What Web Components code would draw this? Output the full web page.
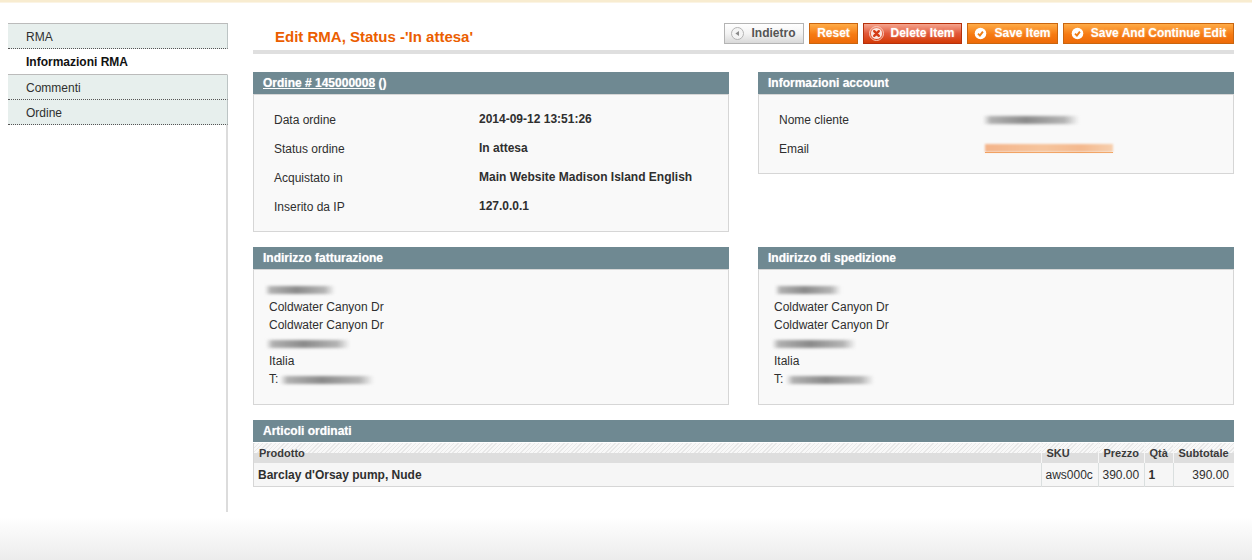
<!DOCTYPE html>
<html lang="it">

<head>
  <meta charset="UTF-8">
  <title>Edit RMA</title>
  <style>
    html, body { margin: 0; padding: 0; }
    body {
      width: 1252px;
      height: 560px;
      overflow: hidden;
      display: flex;
      flex-direction: column;
      background: #fff;
      color: #2f2f2f;
      font: 12px/18px "Liberation Sans", Arial, sans-serif;
    }
    .columns { display: flex; align-items: stretch; height: 489px; padding: 20px 18px 0 8px; box-sizing: content-box; }
    .strip { background: #f8ecd0; border-bottom: 1px solid #fbf4e4; box-sizing: border-box; height: 3px; }
    .content { flex: 1; margin-left: 25px; min-width: 0; }
    .grid { display: grid; grid-template-columns: 476px 476px; column-gap: 29px; row-gap: 15px; align-items: start; margin-bottom: 15px; }
    .foot { flex: 1; background: linear-gradient(#fff 0, #fff 5px, #ececec 100%); }
    rma-panel a { color: #fff; }
  </style>
</head>

<body>
  <div class="strip"></div>
  <div class="columns">
    <rma-sidebar>
      <rma-tab>RMA</rma-tab>
      <rma-tab active>Informazioni RMA</rma-tab>
      <rma-tab>Commenti</rma-tab>
      <rma-tab>Ordine</rma-tab>
    </rma-sidebar>

    <div class="content">
      <rma-header title-text="Edit RMA, Status -'In attesa'">
        <rma-button kind="grey" icon="back" width="80">Indietro</rma-button>
        <rma-button width="49">Reset</rma-button>
        <rma-button kind="red" icon="cross" width="99">Delete Item</rma-button>
        <rma-button icon="check" width="91">Save Item</rma-button>
        <rma-button icon="check" width="171">Save And Continue Edit</rma-button>
      </rma-header>

      <div class="grid">
        <rma-panel>
          <span slot="title"><a href="#">Ordine # 145000008</a> ()</span>
          <rma-info label="Data ordine"><b>2014-09-12 13:51:26</b></rma-info>
          <rma-info label="Status ordine"><b>In attesa</b></rma-info>
          <rma-info label="Acquistato in"><b>Main Website Madison Island English</b></rma-info>
          <rma-info label="Inserito da IP"><b>127.0.0.1</b></rma-info>
        </rma-panel>
        <rma-panel>
          <span slot="title">Informazioni account</span>
          <rma-info label="Nome cliente"><rma-blur width="96" offset="-1"></rma-blur></rma-info>
          <rma-info label="Email"><rma-blur width="128" offset="1" tone="mail"></rma-blur></rma-info>
        </rma-panel>
        <rma-panel>
          <span slot="title">Indirizzo fatturazione</span>
          <rma-address>
            <div><rma-blur width="70" offset="-4"></rma-blur></div>
            <div>Coldwater Canyon Dr</div>
            <div>Coldwater Canyon Dr</div>
            <div><rma-blur width="84" offset="-3"></rma-blur></div>
            <div>Italia</div>
            <div>T:<rma-blur width="94" offset="2"></rma-blur></div>
          </rma-address>
        </rma-panel>
        <rma-panel>
          <span slot="title">Indirizzo di spedizione</span>
          <rma-address>
            <div><rma-blur width="66" offset="1"></rma-blur></div>
            <div>Coldwater Canyon Dr</div>
            <div>Coldwater Canyon Dr</div>
            <div><rma-blur width="84" offset="-2"></rma-blur></div>
            <div>Italia</div>
            <div>T:<rma-blur width="88" offset="3"></rma-blur></div>
          </rma-address>
        </rma-panel>
      </div>

      <rma-items></rma-items>
    </div>
  </div>
  <div class="foot"></div>

  <script>
    class RmaSidebar extends HTMLElement {
      constructor() {
        super();
        this.attachShadow({ mode: 'open' });
        this.shadowRoot.innerHTML = `
          <style>
            :host {
              display: block;
              flex: none;
              width: 220px;
              box-sizing: border-box;
              border-right: 2px solid #dcdcdc;
              color: #2f2f2f;
            }
            .tabs { margin-right: -2px; }
          </style>
          <div class="tabs"><slot></slot></div>
        `;
      }
    }

    class RmaTab extends HTMLElement {
      constructor() {
        super();
        this.attachShadow({ mode: 'open' });
        this.shadowRoot.innerHTML = `
          <style>
            :host {
              display: block;
              height: 24px;
              padding-left: 18px;
              background: #e7efed;
              border-right: 1px solid #bcc4c4;
              border-bottom: 1px dotted #555;
              line-height: 26px;
              color: #2f2f2f;
            }
            :host([active]) {
              height: 25px;
              background: #fff;
              border-right-color: transparent;
              border-bottom: 1px solid #bbb;
              font-weight: bold;
              color: #111;
            }
          </style>
          <slot></slot>
        `;
      }
      connectedCallback() {
        // first tab carries the panel's top line
        if (!this.previousElementSibling) {
          this.style.borderTop = '1px solid #bbb';
        }
      }
    }

    class RmaHeader extends HTMLElement {
      constructor() {
        super();
        this.attachShadow({ mode: 'open' });
      }
      connectedCallback() {
        this.shadowRoot.innerHTML = `
          <style>
            :host {
              display: flex;
              justify-content: space-between;
              align-items: flex-start;
              height: 27px;
              margin-bottom: 18px;
              border-bottom: 4px solid #dfdfdf;
            }
            h3 {
              margin: 5px 0 0 22px;
              font: bold 15px/18px "Liberation Sans", Arial, sans-serif;
              color: #eb5e00;
            }
            .buttons { display: flex; gap: 5px; }
          </style>
          <h3>${this.getAttribute('title-text')}</h3>
          <div class="buttons"><slot></slot></div>
        `;
      }
    }

    const BUTTON_ICONS = {
      back: `<circle cx="7.5" cy="7.5" r="6" fill="#f4f4f4" stroke="#b4b4b4"/><path d="M9 5v5L5.4 7.5z" fill="#8a8a8a"/>`,
      cross: `<circle cx="7.5" cy="7.5" r="7" fill="none" stroke="#f7c9b8"/><circle cx="7.5" cy="7.5" r="5.6" fill="#fbe6de"/><path d="M5.2 5.2l4.6 4.6M9.8 5.2l-4.6 4.6" stroke="#d43c14" stroke-width="2.4" stroke-linecap="round"/>`,
      check: `<circle cx="7.5" cy="7.5" r="5.8" fill="#fff"/><path d="M5 7.6l1.9 2 3-4" fill="none" stroke="#ef7d13" stroke-width="1.9"/>`
    };

    class RmaButton extends HTMLElement {
      constructor() {
        super();
        this.attachShadow({ mode: 'open' });
      }
      connectedCallback() {
        const icon = BUTTON_ICONS[this.getAttribute('icon')];
        this.shadowRoot.innerHTML = `
          <style>
            :host {
              display: flex;
              align-items: center;
              justify-content: center;
              gap: 6px;
              box-sizing: border-box;
              width: ${this.getAttribute('width')}px;
              height: 21px;
              padding: 0 ${icon ? 1 : 0}px 1px 0;
              border: 1px solid #c9650f;
              background: linear-gradient(#ffac47, #f67a12 55%, #ee6a08);
              color: #fff;
              font: bold 12px/18px "Liberation Sans", Arial, sans-serif;
              text-shadow: 0 0 2px rgba(255, 225, 190, .75);
              white-space: nowrap;
            }
            :host([kind="red"]) {
              border-color: #b5300c;
              background: linear-gradient(#f5a58e, #e2593a 50%, #d43a06);
              text-shadow: 0 0 2px rgba(255, 225, 215, .7);
            }
            :host([kind="grey"]) {
              border-color: #b4b4b4;
              background: linear-gradient(#fff, #f3f3f3 50%, #d9d9d9);
              color: #555;
              text-shadow: none;
              gap: 7px;
              padding-right: 3px;
            }
            svg { flex: none; }
          </style>
          ${icon ? `<svg width="15" height="15" viewBox="0 0 15 15">${icon}</svg>` : ''}
          <slot></slot>
        `;
      }
    }

    class RmaPanel extends HTMLElement {
      constructor() {
        super();
        this.attachShadow({ mode: 'open' });
        this.shadowRoot.innerHTML = `
          <style>
            :host { display: block; }
            .head {
              height: 22px;
              padding-left: 10px;
              background: #6f8992;
              color: #fff;
              font-weight: bold;
              line-height: 22px;
              text-shadow: 0 0 1px rgba(255, 255, 255, .6);
            }
            .body {
              box-sizing: border-box;
              padding: 11px 0 9px;
              background: #f9f9f9;
              border: 1px solid #d6d6d6;
            }
          </style>
          <div class="head"><slot name="title"></slot></div>
          <div class="body"><slot></slot></div>
        `;
      }
    }

    class RmaInfo extends HTMLElement {
      constructor() {
        super();
        this.attachShadow({ mode: 'open' });
      }
      connectedCallback() {
        this.shadowRoot.innerHTML = `
          <style>
            :host {
              display: grid;
              grid-template-columns: 205px 1fr;
              height: 29px;
              padding-left: 20px;
              line-height: 29px;
              color: #2f2f2f;
            }
            .value { position: relative; top: -1px; }
          </style>
          <span>${this.getAttribute('label')}</span>
          <span class="value"><slot></slot></span>
        `;
      }
    }

    class RmaAddress extends HTMLElement {
      constructor() {
        super();
        this.attachShadow({ mode: 'open' });
        this.shadowRoot.innerHTML = `
          <style>
            :host {
              display: block;
              margin-top: -1px;
              padding: 0 15px 7px;
              line-height: 18px;
              color: #2f2f2f;
            }
          </style>
          <slot></slot>
        `;
      }
    }

    // stands in for the customer data that is blurred out in the screenshot
    class RmaBlur extends HTMLElement {
      constructor() {
        super();
        this.attachShadow({ mode: 'open' });
      }
      connectedCallback() {
        const mail = this.getAttribute('tone') === 'mail';
        this.shadowRoot.innerHTML = `
          <style>
            :host {
              display: inline-block;
              vertical-align: middle;
              width: ${this.getAttribute('width')}px;
              margin-left: ${this.getAttribute('offset') || 0}px;
              ${mail ? 'border-bottom: 1px solid #f0984f;' : ''}
            }
            div {
              height: 8px;
              filter: blur(${mail ? 1.3 : 1.7}px);
              background: ${mail
                ? 'linear-gradient(90deg, #f4b48a, #f6c49c 45%, #f4b98e 75%, #f7cfae)'
                : 'linear-gradient(90deg, transparent, #b0b0b0 8%, #8a8a8a 45%, #b4b4b4 85%, transparent)'};
            }
          </style>
          <div></div>
        `;
      }
    }

    class RmaItems extends HTMLElement {
      constructor() {
        super();
        this.attachShadow({ mode: 'open' });
        this.shadowRoot.innerHTML = `
          <style>
            :host { display: block; }
            .head {
              height: 22px;
              padding-left: 10px;
              background: #6f8992;
              color: #fff;
              font-weight: bold;
              line-height: 22px;
              text-shadow: 0 0 1px rgba(255, 255, 255, .6);
            }
            table {
              width: 100%;
              table-layout: fixed;
              border-collapse: collapse;
              background: #f6f6f6;
              border-left: 1px solid #d6d6d6;
              border-bottom: 1px solid #d6d6d6;
              border-top: 1px solid #fff;
            }
            th {
              height: 20px;
              padding: 1px 5px 0;
              box-sizing: border-box;
              text-align: left;
              font-size: 11px;
              line-height: 19px;
              color: #3a3a3a;
              background:
                repeating-linear-gradient(135deg, #e8e8e8 0 1px, #f8f8f8 1px 3px) top / 100% 10px no-repeat,
                #dedede;
              border-left: 1px solid #f6f6f6;
            }
            th:first-child { border-left: 0; }
            td {
              height: 23px;
              padding: 0 4px;
              color: #2f2f2f;
              border-left: 1px solid #dadfdf;
              white-space: nowrap;
            }
            td:first-child { border-left: 0; font-weight: bold; }
            .num { text-align: right; padding-right: 5px; }
          </style>
          <div class="head">Articoli ordinati</div>
          <table>
            <colgroup>
              <col><col style="width:57px"><col style="width:46px"><col style="width:29px"><col style="width:61px">
            </colgroup>
            <tr><th>Prodotto</th><th>SKU</th><th>Prezzo</th><th>Qtà</th><th>Subtotale</th></tr>
            <tr><td>Barclay d'Orsay pump, Nude</td><td>aws000c</td><td>390.00</td><td><b>1</b></td><td class="num">390.00</td></tr>
          </table>
        `;
      }
    }

    customElements.define('rma-sidebar', RmaSidebar);
    customElements.define('rma-tab', RmaTab);
    customElements.define('rma-header', RmaHeader);
    customElements.define('rma-button', RmaButton);
    customElements.define('rma-panel', RmaPanel);
    customElements.define('rma-info', RmaInfo);
    customElements.define('rma-address', RmaAddress);
    customElements.define('rma-blur', RmaBlur);
    customElements.define('rma-items', RmaItems);
  </script>
</body>

</html>
